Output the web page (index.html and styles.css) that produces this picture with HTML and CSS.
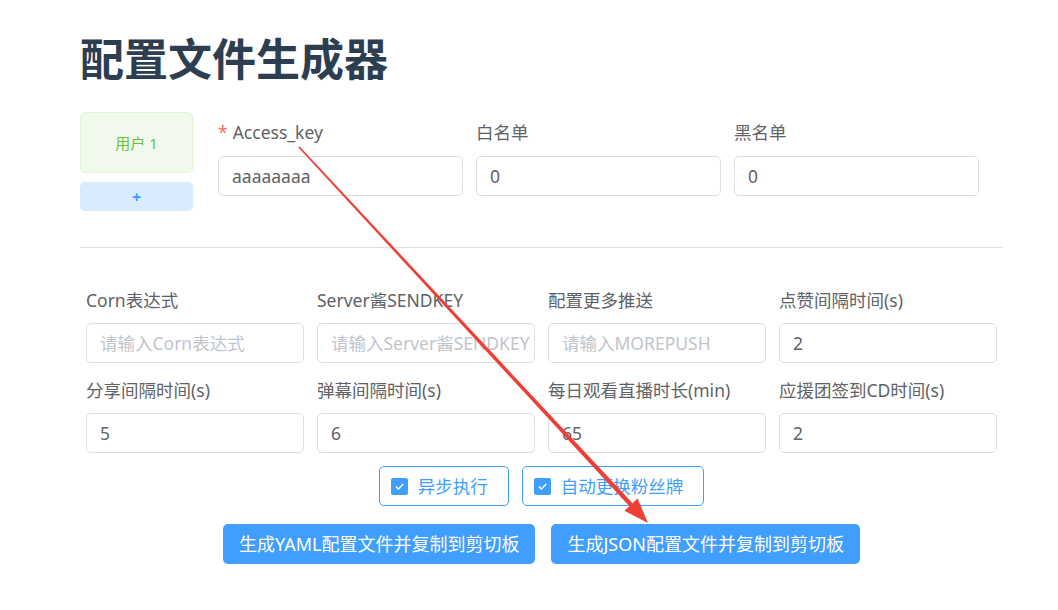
FILE: index.html
```html
<!DOCTYPE html>
<html lang="zh-CN">
<head>
<meta charset="utf-8">
<title>配置文件生成器</title>
<link rel="stylesheet" href="styles.css">
</head>
<body>
<div class="page">
  <h1 class="title">配置文件生成器</h1>

  <div class="users-row">
    <div class="users">
      <div class="user-card">用户 1</div>
      <div class="add-user">+</div>
    </div>
    <div class="fields3">
      <div class="field">
        <div class="label"><span class="req">*</span>Access_key</div>
        <div class="input">aaaaaaaa</div>
      </div>
      <div class="field">
        <div class="label">白名单</div>
        <div class="input">0</div>
      </div>
      <div class="field">
        <div class="label">黑名单</div>
        <div class="input">0</div>
      </div>
    </div>
  </div>

  <div class="divider"></div>

  <div class="grid">
    <div class="field">
      <div class="label">Corn表达式</div>
      <div class="input placeholder">请输入Corn表达式</div>
    </div>
    <div class="field">
      <div class="label">Server酱SENDKEY</div>
      <div class="input placeholder">请输入Server酱SENDKEY</div>
    </div>
    <div class="field">
      <div class="label">配置更多推送</div>
      <div class="input placeholder">请输入MOREPUSH</div>
    </div>
    <div class="field">
      <div class="label">点赞间隔时间(s)</div>
      <div class="input">2</div>
    </div>
    <div class="field">
      <div class="label">分享间隔时间(s)</div>
      <div class="input">5</div>
    </div>
    <div class="field">
      <div class="label">弹幕间隔时间(s)</div>
      <div class="input">6</div>
    </div>
    <div class="field">
      <div class="label">每日观看直播时长(min)</div>
      <div class="input">65</div>
    </div>
    <div class="field">
      <div class="label">应援团签到CD时间(s)</div>
      <div class="input">2</div>
    </div>
  </div>

  <div class="checks">
    <div class="check">
      <span class="box"><svg width="17" height="17" viewBox="0 0 17 17"><path d="M4.8 8.6 L7.4 11.1 L12.2 6" fill="none" stroke="#fff" stroke-width="1.4"/></svg></span>
      <span class="check-text">异步执行</span>
    </div>
    <div class="check">
      <span class="box"><svg width="17" height="17" viewBox="0 0 17 17"><path d="M4.8 8.6 L7.4 11.1 L12.2 6" fill="none" stroke="#fff" stroke-width="1.4"/></svg></span>
      <span class="check-text">自动更换粉丝牌</span>
    </div>
  </div>

  <div class="buttons">
    <div class="btn">生成YAML配置文件并复制到剪切板</div>
    <div class="btn">生成JSON配置文件并复制到剪切板</div>
  </div>
</div>

<svg class="arrow" width="1058" height="610" viewBox="0 0 1058 610">
  <polygon points="298.34,147.61 299.66,146.39 632.61,503.2 629.39,506.2" fill="#ee3f36"/>
  <polygon points="648,523 624.4,510.8 637.6,498.6" fill="#ee3f36"/>
</svg>
</body>
</html>
```

FILE: styles.css
```css
* { box-sizing: border-box; }

body {
  margin: 0;
  position: relative;
  background: #fff;
  font-family: "Noto Sans", "Noto Sans CJK SC", sans-serif;
  color: #606266;
}

.page {
  width: 1003px;
  padding-left: 80px;
}

.title {
  margin: 35px 0 0;
  font-size: 44px;
  line-height: 44px;
  height: 44px;
  font-weight: 700;
  color: #2c3e50;
  font-family: "Noto Sans CJK SC", sans-serif;
}

.users-row {
  display: flex;
  margin-top: 33px;
}

.users {
  width: 113px;
  display: flex;
  flex-direction: column;
  gap: 9px;
}

.user-card {
  height: 61px;
  background: #f0f9eb;
  border: 1px solid #e1f3d8;
  border-radius: 5px;
  color: #67c23a;
  font-size: 15px;
  display: flex;
  align-items: center;
  justify-content: center;
}

.add-user {
  height: 29px;
  background: #d9ecff;
  border-radius: 5px;
  color: #409eff;
  font-size: 16px;
  font-weight: 700;
  display: flex;
  align-items: center;
  justify-content: center;
}

.fields3 {
  margin-left: 25px;
  margin-top: 10px;
  display: grid;
  grid-template-columns: 245px 245px 245px;
  column-gap: 13px;
  align-self: flex-start;
}

.field { min-width: 0; }

.label {
  font-size: 17.5px;
  line-height: 20px;
  height: 20px;
  margin-bottom: 14px;
  white-space: nowrap;
}

.req {
  color: #f56c6c;
  margin-right: 5px;
}

.input {
  height: 40px;
  border: 1px solid #dcdfe6;
  border-radius: 5px;
  padding: 0 13px;
  font-size: 17.5px;
  line-height: 38px;
  color: #606266;
  white-space: nowrap;
  overflow: hidden;
}

.input.placeholder { color: #c0c4cc; }

.divider {
  margin-top: 36px;
  height: 1px;
  background: #dcdfe6;
}

.grid {
  margin-top: 42px;
  margin-left: 6px;
  width: 911px;
  display: grid;
  grid-template-columns: repeat(4, 1fr);
  column-gap: 13px;
  row-gap: 17px;
}

.grid .label { margin-bottom: 13px; }

.checks {
  margin-top: 13px;
  display: flex;
  justify-content: center;
  gap: 13px;
}

.check {
  height: 40px;
  border: 1px solid #409eff;
  border-radius: 5px;
  padding: 0 20px 0 11px;
  display: flex;
  align-items: center;
  color: #409eff;
  font-size: 17.5px;
}

.box {
  width: 17px;
  height: 17px;
  background: #409eff;
  border-radius: 2px;
  display: block;
  margin-right: 10px;
}

.box svg { display: block; }

.check-text { line-height: 20px; }

.buttons {
  margin-top: 18px;
  display: flex;
  justify-content: center;
  gap: 16px;
}

.btn {
  height: 40px;
  padding: 0 16px;
  background: #409eff;
  color: #fff;
  border-radius: 5px;
  font-size: 18px;
  line-height: 40px;
  white-space: nowrap;
}

.arrow {
  position: absolute;
  left: 0;
  top: 0;
  pointer-events: none;
}
```
